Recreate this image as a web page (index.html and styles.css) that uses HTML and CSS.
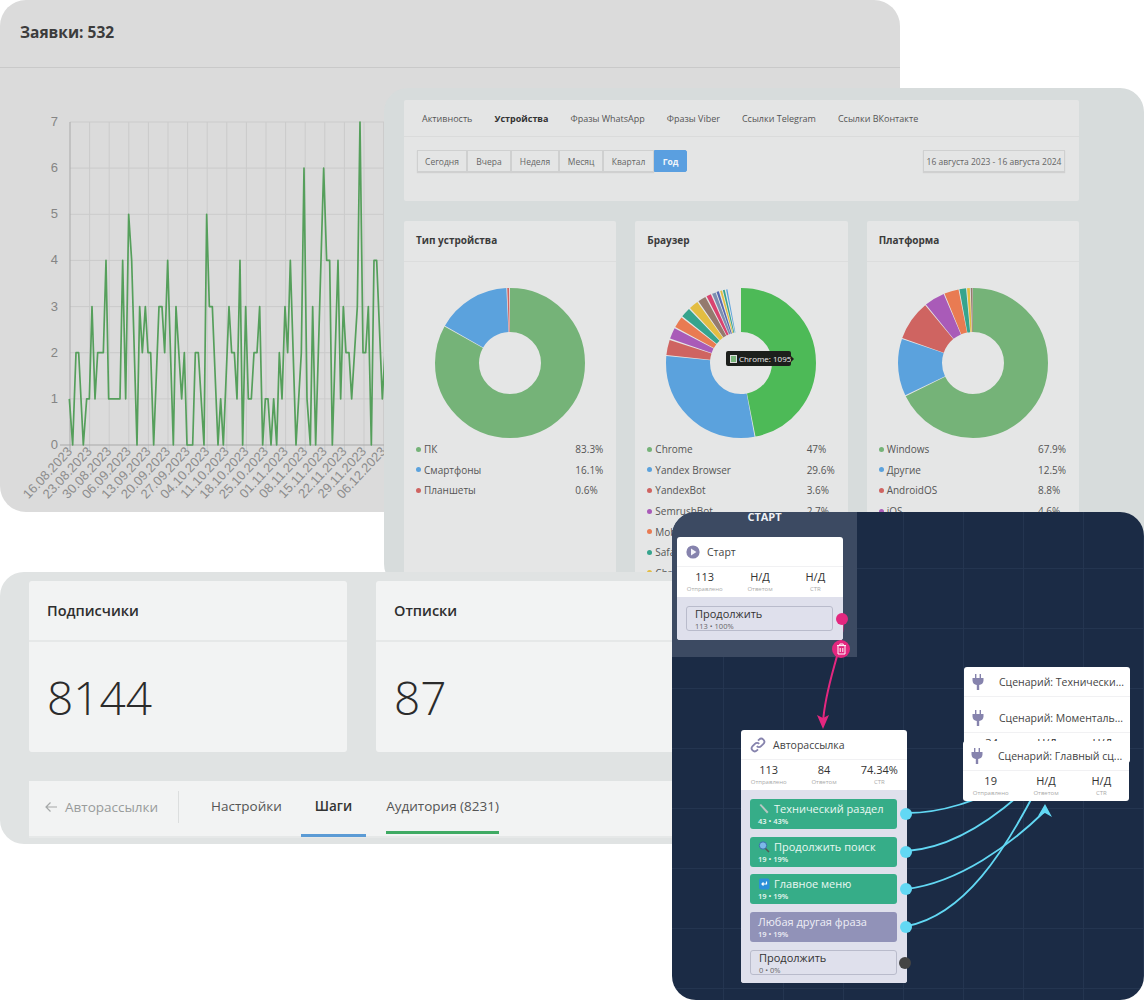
FILE: index.html
```html
<!DOCTYPE html>
<html lang="ru">
<head>
<meta charset="utf-8">
<title>Статистика</title>
<link rel="stylesheet" href="styles.css">
</head>
<body>
<main class="desk">

  <section class="win win-chart">
    <header class="chart-head"><h2>Заявки: 532</h2></header>
    <svg class="chart" width="400" height="444" viewBox="0 68 400 444">
      <path class="grid" d="M70 122H400M70 168.1H400M70 214.3H400M70 260.4H400M70 306.6H400M70 352.7H400M70 398.9H400M89.6 122V450M109.2 122V450M128.8 122V450M148.4 122V450M168 122V450M187.6 122V450M207.2 122V450M226.8 122V450M246.4 122V450M266 122V450M285.6 122V450M305.2 122V450M324.8 122V450M344.4 122V450M364 122V450M383.6 122V450"/>
      <path class="axis" d="M70 122V450M60 445H400"/>
      <g class="y-labels">
        <text x="58" y="126">7</text><text x="58" y="172">6</text><text x="58" y="218">5</text><text x="58" y="264">4</text><text x="58" y="311">3</text><text x="58" y="357">2</text><text x="58" y="403">1</text><text x="58" y="449">0</text>
      </g>
      <g class="x-labels">
        <text transform="translate(73 452) rotate(-47)">16.08.2023</text>
        <text transform="translate(92.6 452) rotate(-47)">23.08.2023</text>
        <text transform="translate(112.2 452) rotate(-47)">30.08.2023</text>
        <text transform="translate(131.8 452) rotate(-47)">06.09.2023</text>
        <text transform="translate(151.4 452) rotate(-47)">13.09.2023</text>
        <text transform="translate(171 452) rotate(-47)">20.09.2023</text>
        <text transform="translate(190.6 452) rotate(-47)">27.09.2023</text>
        <text transform="translate(210.2 452) rotate(-47)">04.10.2023</text>
        <text transform="translate(229.8 452) rotate(-47)">11.10.2023</text>
        <text transform="translate(249.4 452) rotate(-47)">18.10.2023</text>
        <text transform="translate(269 452) rotate(-47)">25.10.2023</text>
        <text transform="translate(288.6 452) rotate(-47)">01.11.2023</text>
        <text transform="translate(308.2 452) rotate(-47)">08.11.2023</text>
        <text transform="translate(327.8 452) rotate(-47)">15.11.2023</text>
        <text transform="translate(347.4 452) rotate(-47)">22.11.2023</text>
        <text transform="translate(367 452) rotate(-47)">29.11.2023</text>
        <text transform="translate(386.6 452) rotate(-47)">06.12.2023</text>
      </g>
      <polyline class="line" transform="translate(0 445) scale(0.33333 -46.14)" points="208,1 218,0 228,2 236,2 250,0 260,1 268,1 276,3 285,1 293,2 310,2 318,4 326,1 360,1 368,4 377,1 386,5 395,4 411,0 419,3 427,2 436,3 444,2 452,2 461,0 477,3 486,3 494,2 503,4 520,0 528,3 545,1 553,2 561,0 578,0 586,2 595,2 612,0 620,5 628,3 637,3 654,0 662,1 670,0 687,3 695,2 703,2 711,1 720,4 728,0 737,3 745,1 754,1 762,2 771,2 779,3 788,0 796,1 804,1 813,0 821,1 830,0 838,2 846,1 855,3 863,2 871,4 888,0 904,2 912,6 921,1 931,0 938,3 947,0 963,4 971,6 980,4 989,4 997,0 1014,4 1022,1 1030,3 1038,2 1047,2 1055,1 1072,3 1080,7 1089,2 1097,2 1105,3 1114,0 1122,4 1130,4 1147,1 1155,2"/>
    </svg>
  </section>

  <section class="win win-devices">
    <div class="dev-panel">
      <nav class="dev-tabs">
        <a>Активность</a><a class="on">Устройства</a><a>Фразы WhatsApp</a><a>Фразы Viber</a><a>Ссылки Telegram</a><a>Ссылки ВКонтакте</a>
      </nav>
      <div class="dev-filters">
        <div class="btn-group">
          <button class="b-1">Сегодня</button><button class="b-2">Вчера</button><button class="b-3">Неделя</button><button class="b-4">Месяц</button><button class="b-5">Квартал</button><button class="b-6 active">Год</button>
        </div>
        <button class="date">16 августа 2023 - 16 августа 2024</button>
      </div>
    </div>

    <div class="dev-cards">
      <article class="dev-card">
        <h3>Тип устройства</h3>
        <div class="donut-wrap">
          <svg class="donut" width="150" height="150" viewBox="0 0 150 150">
            <g transform="rotate(-90 75 75)">
              <circle class="s-green" cx="75" cy="75" r="53" pathLength="100" stroke-dasharray="83.1 100"/>
              <circle class="s-blue" cx="75" cy="75" r="53" pathLength="100" stroke-dasharray="15.9 100" stroke-dashoffset="-83.3"/>
              <circle class="s-red" cx="75" cy="75" r="53" pathLength="100" stroke-dasharray="0.4 100" stroke-dashoffset="-99.4"/>
            </g>
          </svg>
        </div>
        <ul class="legend">
          <li><i class="d-green"></i><span>ПК</span><b>83.3%</b></li>
          <li><i class="d-blue"></i><span>Смартфоны</span><b>16.1%</b></li>
          <li><i class="d-red"></i><span>Планшеты</span><b>0.6%</b></li>
        </ul>
      </article>

      <article class="dev-card">
        <h3>Браузер</h3>
        <div class="donut-wrap">
          <svg class="donut" width="150" height="150" viewBox="0 0 150 150">
            <g transform="rotate(-90 75 75)">
              <circle class="s-chrome" cx="75" cy="75" r="53" pathLength="100" stroke-dasharray="46.9 100"/>
              <circle class="s-blue" cx="75" cy="75" r="53" pathLength="100" stroke-dasharray="29.4 100" stroke-dashoffset="-47.1"/>
              <circle class="s-red" cx="75" cy="75" r="53" pathLength="100" stroke-dasharray="3.3 100" stroke-dashoffset="-76.7"/>
              <circle class="s-purple" cx="75" cy="75" r="53" pathLength="100" stroke-dasharray="2.4 100" stroke-dashoffset="-80.3"/>
              <circle class="s-orange" cx="75" cy="75" r="53" pathLength="100" stroke-dasharray="2.4 100" stroke-dashoffset="-83"/>
              <circle class="s-teal" cx="75" cy="75" r="53" pathLength="100" stroke-dasharray="2.1 100" stroke-dashoffset="-85.7"/>
              <circle class="s-yellow" cx="75" cy="75" r="53" pathLength="100" stroke-dasharray="2 100" stroke-dashoffset="-88.1"/>
              <circle class="s-brown" cx="75" cy="75" r="53" pathLength="100" stroke-dasharray="1.7 100" stroke-dashoffset="-90.4"/>
              <circle class="s-pink" cx="75" cy="75" r="53" pathLength="100" stroke-dasharray="1 100" stroke-dashoffset="-92.4"/>
              <circle class="s-slate" cx="75" cy="75" r="53" pathLength="100" stroke-dasharray="0.8 100" stroke-dashoffset="-93.7"/>
              <circle class="s-indigo" cx="75" cy="75" r="53" pathLength="100" stroke-dasharray="0.5 100" stroke-dashoffset="-94.7"/>
              <circle class="s-yellow" cx="75" cy="75" r="53" pathLength="100" stroke-dasharray="0.4 100" stroke-dashoffset="-95.5"/>
              <circle class="s-teal" cx="75" cy="75" r="53" pathLength="100" stroke-dasharray="0.4 100" stroke-dashoffset="-96.1"/>
              <circle class="s-blue" cx="75" cy="75" r="53" pathLength="100" stroke-dasharray="0.3 100" stroke-dashoffset="-96.8"/>
            </g>
          </svg>
          <div class="tip"><i></i>Chrome: 1095</div>
        </div>
        <ul class="legend">
          <li><i class="d-green"></i><span>Chrome</span><b>47%</b></li>
          <li><i class="d-blue"></i><span>Yandex Browser</span><b>29.6%</b></li>
          <li><i class="d-red"></i><span>YandexBot</span><b>3.6%</b></li>
          <li><i class="d-purple"></i><span>SemrushBot</span><b>2.7%</b></li>
          <li><i class="d-orange"></i><span>Mobile Safari</span><b>2.7%</b></li>
          <li><i class="d-teal"></i><span>Safari</span><b>2.4%</b></li>
          <li><i class="d-yellow"></i><span>Chrome Mobile</span><b>2.3%</b></li>
        </ul>
      </article>

      <article class="dev-card">
        <h3>Платформа</h3>
        <div class="donut-wrap">
          <svg class="donut" width="150" height="150" viewBox="0 0 150 150">
            <g transform="rotate(-90 75 75)">
              <circle class="s-green" cx="75" cy="75" r="53" pathLength="100" stroke-dasharray="67.7 100"/>
              <circle class="s-blue" cx="75" cy="75" r="53" pathLength="100" stroke-dasharray="12.3 100" stroke-dashoffset="-67.9"/>
              <circle class="s-red" cx="75" cy="75" r="53" pathLength="100" stroke-dasharray="8.6 100" stroke-dashoffset="-80.4"/>
              <circle class="s-purple" cx="75" cy="75" r="53" pathLength="100" stroke-dasharray="4.4 100" stroke-dashoffset="-89.2"/>
              <circle class="s-orange" cx="75" cy="75" r="53" pathLength="100" stroke-dasharray="3.1 100" stroke-dashoffset="-93.8"/>
              <circle class="s-teal" cx="75" cy="75" r="53" pathLength="100" stroke-dasharray="1.4 100" stroke-dashoffset="-97.1"/>
              <circle class="s-yellow" cx="75" cy="75" r="53" pathLength="100" stroke-dasharray="0.6 100" stroke-dashoffset="-98.7"/>
              <circle class="s-brown" cx="75" cy="75" r="53" pathLength="100" stroke-dasharray="0.4 100" stroke-dashoffset="-99.5"/>
            </g>
          </svg>
        </div>
        <ul class="legend">
          <li><i class="d-green"></i><span>Windows</span><b>67.9%</b></li>
          <li><i class="d-blue"></i><span>Другие</span><b>12.5%</b></li>
          <li><i class="d-red"></i><span>AndroidOS</span><b>8.8%</b></li>
          <li><i class="d-purple"></i><span>iOS</span><b>4.6%</b></li>
        </ul>
      </article>
    </div>
  </section>

  <section class="win win-subs">
    <div class="sub-cards">
      <article class="sub-card"><h3>Подписчики</h3><div class="sub-num">8144</div></article>
      <article class="sub-card"><h3>Отписки</h3><div class="sub-num">87</div></article>
    </div>
    <nav class="sub-tabs">
      <a class="back">
        <svg width="14" height="12" viewBox="0 0 14 12"><path d="M13 6H2M6.5 1.5 2 6l4.5 4.5"/></svg>
        Авторассылки
      </a>
      <a class="tab">Настройки</a>
      <a class="tab tab-on">Шаги</a>
      <a class="tab tab-aud">Аудитория (8231)</a>
    </nav>
  </section>

  <section class="win win-flow">
    <div class="frame"><span>СТАРТ</span></div>

    <svg class="wires" width="472" height="488" viewBox="672 512 472 488">
      <path class="wire-pink" d="M843 620C843 650 826 680 823 722"/>
      <path class="head-pink" d="M823 729 817 715 823 718 829 715Z"/>
      <path class="wire-cyan" d="M907 813C945 813 975 800 1010 785"/>
      <path class="wire-cyan" d="M907 851C950 848 990 822 1025 790"/>
      <path class="wire-cyan" d="M907 889C960 882 1010 845 1044 812"/>
      <path class="wire-cyan" d="M907 926C965 915 1005 850 1036 790"/>
      <path class="head-cyan" d="M1045 804 1052 817 1045 813 1038 816Z"/>
    </svg>

    <article class="node n-start">
      <header class="node-head">
        <svg class="ic" width="14" height="14" viewBox="0 0 14 14"><circle class="ic-fill" cx="7" cy="7" r="6.6"/><path class="ic-white" d="M5 3.6 10.4 7 5 10.4Z"/></svg>
        <span class="node-title">Старт</span>
      </header>
      <div class="stats">
        <div><strong>113</strong><small>Отправлено</small></div>
        <div><strong>Н/Д</strong><small>Ответом</small></div>
        <div><strong>Н/Д</strong><small>CTR</small></div>
      </div>
      <div class="node-body pad-start">
        <div class="act plain"><strong>Продолжить</strong><small>113 • 100%</small><i class="pin pink"></i></div>
      </div>
      <div class="trash">
        <svg width="11" height="12" viewBox="0 0 11 12"><path d="M1 2.6H10M3.8 2.4V1H7.2V2.4M2 2.6V11H9V2.6M4.2 5V9M6.8 5V9"/></svg>
      </div>
    </article>

    <article class="node n-auto">
      <header class="node-head">
        <svg class="ic ic-link" width="16" height="16" viewBox="0 0 16 16"><path d="M6.8 9.2a3 3 0 0 0 4.3 0l2.3-2.3a3 3 0 0 0-4.3-4.3L8 3.7"/><path d="M9.2 6.8a3 3 0 0 0-4.3 0L2.6 9.1a3 3 0 0 0 4.3 4.3L8 12.3"/></svg>
        <span class="node-title">Авторассылка</span>
      </header>
      <div class="stats">
        <div><strong>113</strong><small>Отправлено</small></div>
        <div><strong>84</strong><small>Ответом</small></div>
        <div><strong>74.34%</strong><small>CTR</small></div>
      </div>
      <div class="node-body">
        <div class="act green"><strong><svg class="emo" width="13" height="12" viewBox="0 0 13 12"><path class="emo-wrench" d="M1.5 2 3 1l7.500 8-1.500 1.500Z"/></svg>Технический раздел</strong><small>43 • 43%</small><i class="pin cyan"></i></div>
        <div class="act green"><strong><svg class="emo" width="13" height="12" viewBox="0 0 13 12"><circle class="emo-glass" cx="5" cy="4.500" r="3.700"/><path class="emo-handle" d="M7.500 7.500 11 11"/></svg>Продолжить поиск</strong><small>19 • 19%</small><i class="pin cyan"></i></div>
        <div class="act green"><strong><svg class="emo" width="13" height="12" viewBox="0 0 13 12"><rect class="emo-box" x="1" y="0.500" width="10.500" height="11" rx="2"/><path class="emo-ret" d="M8.500 3.500v2.500H4M5.500 4.500 4 6l1.500 1.500"/></svg>Главное меню</strong><small>19 • 19%</small><i class="pin cyan"></i></div>
        <div class="act grey"><strong>Любая другая фраза</strong><small>19 • 19%</small><i class="pin cyan"></i></div>
        <div class="act plain short"><strong>Продолжить</strong><small>0 • 0%</small><i class="pin dark"></i></div>
      </div>
    </article>

    <article class="node n-s1">
      <header class="node-head wide">
        <svg class="ic" width="12" height="16" viewBox="0 0 12 16"><path class="ic-fill" d="M3 0h1.400v4H7.600V0H9v4h2.500v2.500c0 2.600-2 4.300-4.300 4.500V16H4.800V11C2.500 10.800.5 9.100.5 6.500V4H3Z"/></svg>
        <span class="node-title">Сценарий: Технически...</span>
      </header>
      <div class="stats">
        <div><strong>43</strong><small>Отправлено</small></div>
        <div><strong>Н/Д</strong><small>Ответом</small></div>
        <div><strong>Н/Д</strong><small>CTR</small></div>
      </div>
    </article>

    <article class="node n-s2">
      <header class="node-head wide">
        <svg class="ic" width="12" height="16" viewBox="0 0 12 16"><path class="ic-fill" d="M3 0h1.400v4H7.600V0H9v4h2.500v2.500c0 2.600-2 4.300-4.300 4.500V16H4.800V11C2.500 10.800.5 9.100.5 6.500V4H3Z"/></svg>
        <span class="node-title">Сценарий: Моменталь...</span>
      </header>
      <div class="stats">
        <div><strong>34</strong><small>Отправлено</small></div>
        <div><strong>Н/Д</strong><small>Ответом</small></div>
        <div><strong>Н/Д</strong><small>CTR</small></div>
      </div>
    </article>

    <article class="node n-s3">
      <header class="node-head wide">
        <svg class="ic" width="12" height="16" viewBox="0 0 12 16"><path class="ic-fill" d="M3 0h1.400v4H7.600V0H9v4h2.500v2.500c0 2.600-2 4.300-4.300 4.500V16H4.800V11C2.500 10.800.5 9.100.5 6.500V4H3Z"/></svg>
        <span class="node-title">Сценарий: Главный сц...</span>
      </header>
      <div class="stats">
        <div><strong>19</strong><small>Отправлено</small></div>
        <div><strong>Н/Д</strong><small>Ответом</small></div>
        <div><strong>Н/Д</strong><small>CTR</small></div>
      </div>
    </article>
  </section>
</main>
</body>
</html>
```
FILE: styles.css
```css
* { box-sizing: border-box; }
html, body { margin: 0; background: #fff; }
body { font-family: "Open Sans", "Liberation Sans", sans-serif; color: #333; }
h2, h3, ul { margin: 0; padding: 0; }
ul { list-style: none; }

.desk { position: relative; width: 1144px; height: 1000px; overflow: hidden; }
.win { position: absolute; overflow: hidden; }

/* chart window */
.win-chart { left: 0; top: 0; width: 900px; height: 512px; background: #dbdbdb; border-radius: 26px; }
.chart-head { height: 68px; padding: 22px 20px 0; border-bottom: 1px solid #c9c9c9; }
.chart-head h2 { font-size: 15.500px; line-height: 20px; font-weight: 700; color: #3c3c3c; }
.chart { display: block; }
.grid { stroke: #cbcbcb; stroke-width: 1; fill: none; }
.axis { stroke: #a9a9a9; stroke-width: 1; fill: none; }
.y-labels text { font: 13px "Liberation Sans", sans-serif; fill: #858585; text-anchor: end; }
.x-labels text { font: 13px "Liberation Sans", sans-serif; fill: #8d8d8d; text-anchor: end; }
.line { fill: none; stroke: #559f5b; stroke-width: 1.700; vector-effect: non-scaling-stroke; stroke-linejoin: round; }

/* devices window */
.win-devices { left: 384px; top: 88px; width: 760px; height: 500px; background: #d7dcdc; border-radius: 24px; padding: 12px 65px 0 20px; }
.dev-panel { height: 101px; background: #e4e5e5; border-radius: 2px; }
.dev-tabs { display: flex; height: 37px; align-items: center; padding-left: 18px; gap: 22px; border-bottom: 1px solid #dadbdb; font-size: 9px; color: #555; }
.dev-tabs .on { font-weight: 700; color: #333; }
.dev-filters { display: flex; justify-content: space-between; align-items: flex-start; padding: 13px 14px 0 13px; }
.btn-group { display: flex; }
.btn-group button, .date { height: 22px; padding: 0; font: 8.500px "Open Sans", sans-serif; color: #666; background: #e4e5e5; border: 1px solid #cfd0d0; box-shadow: 0 1px 1px #d0d0d0; }
.b-1 { width: 50px; } .b-2 { width: 44px; } .b-3 { width: 48px; } .b-4 { width: 44px; } .b-5 { width: 51px; }
.b-6 { width: 33px; }
.btn-group .active { background: #5a9fe0; border-color: #5a9fe0; color: #f2f6fb; font-weight: 700; border-radius: 0 2px 2px 0; box-shadow: none; }
.date { width: 142px; }
.dev-cards { display: flex; gap: 19px; margin-top: 20px; }
.dev-card { flex: 1 1 0; height: 380px; background: #e5e6e6; border-radius: 2px; }
.dev-card h3 { height: 41px; padding: 12px 12px 0; font-size: 10px; line-height: 14px; font-weight: 700; color: #3b3b3b; border-bottom: 1px solid #dcdddd; }
.donut-wrap { position: relative; display: flex; justify-content: center; padding-top: 26px; height: 177px; }
.donut circle { fill: none; stroke-width: 44; }
.s-green { stroke: #75b378; } .s-blue { stroke: #5ba2dd; } .s-red { stroke: #cf6461; }
.s-chrome { stroke: #4dba57; } .s-purple { stroke: #a95bb8; } .s-orange { stroke: #e97b52; }
.s-teal { stroke: #36a48d; } .s-yellow { stroke: #e3bd42; } .s-brown { stroke: #947a6e; }
.s-pink { stroke: #d9436f; } .s-slate { stroke: #7d8fb0; } .s-indigo { stroke: #5667b0; }
.tip { position: absolute; left: 91px; top: 89px; display: flex; align-items: center; gap: 2px; width: 65px; height: 15px; padding-left: 4px; background: #1c1f1c; border-radius: 2px; color: #eee; font-size: 8px; line-height: 15px; white-space: nowrap; }
.tip i { width: 8px; height: 8px; background: #78b57b; border: 1px solid #ddd; }
.tip::after { content: ""; position: absolute; right: -3px; top: 5px; border-left: 3px solid #1c1f1c; border-top: 3px solid transparent; border-bottom: 3px solid transparent; }
.legend li { display: grid; grid-template-columns: 5px 1fr 41px; column-gap: 3px; align-items: center; height: 20.600px; padding-left: 12px; font-size: 10px; color: #555; }
.legend i { width: 5px; height: 5px; border-radius: 50%; }
.legend b { font-weight: 400; }
.d-green { background: #75b378; } .d-blue { background: #5ba2dd; } .d-red { background: #cf6461; }
.d-purple { background: #a95bb8; } .d-orange { background: #e97b52; } .d-teal { background: #36a48d; } .d-yellow { background: #e3bd42; }

/* subscribers window */
.win-subs { left: 0; top: 572px; width: 700px; height: 272px; background: #e0e3e3; border-radius: 24px; padding: 9px 0 0 29px; }
.sub-cards { display: flex; gap: 29px; }
.sub-card { width: 318px; height: 171px; background: #f2f3f3; border-radius: 3px; }
.sub-card h3 { height: 61px; padding: 20px 18px 0; font-size: 14.500px; line-height: 20px; font-weight: 600; color: #2e2e2e; border-bottom: 2px solid #e6e8e8; }
.sub-num { padding: 25px 18px 0; font-size: 46px; line-height: 60px; font-weight: 300; color: #2b2b2b; }
.sub-tabs { display: flex; height: 57px; margin-top: 29px; padding-left: 15px; background: #f2f3f3; border-bottom: 2px solid #e6e8e8; font-size: 13.500px; color: #555; }
.back { display: flex; align-items: center; gap: 7px; width: 135px; height: 32px; margin-top: 10px; border-right: 1px solid #dcdede; color: #989b9b; }
.back svg { fill: none; stroke: #a5a8a8; stroke-width: 1.200; }
.tab { display: block; padding: 16px 14px 0; height: 55px; margin-left: 18px; color: #555; }
.tab + .tab { margin-left: 5px; }
.tab-on { height: 56px; border-bottom: 3px solid #5b9bd5; font-weight: 600; color: #333; padding-left: 14px; padding-right: 14px; }
.tab-on + .tab { margin-left: 20px; }
.tab-aud { height: 53px; padding-left: 0; padding-right: 0; border-bottom: 3px solid #3faa63; color: #555; }

/* flow window */
.win-flow {
  left: 672px; top: 512px; width: 472px; height: 488px; border-radius: 24px;
  background-color: #1b2b45;
  background-image: linear-gradient(#243550 1px, transparent 1px), linear-gradient(90deg, #243550 1px, transparent 1px);
  background-size: 60px 60px;
  background-position: 51px 56px;
}
.frame { position: absolute; left: 0; top: 0; width: 185px; height: 145px; background: #3c4a62; text-align: center; }
.frame span { display: block; margin-top: -3px; font-size: 11px; line-height: 16px; font-weight: 700; color: #eef0f4; }
.wires { position: absolute; left: 0; top: 0; }
.wire-pink { fill: none; stroke: #e3277f; stroke-width: 2; }
.head-pink { fill: #e3277f; }
.wire-cyan { fill: none; stroke: #62d8f4; stroke-width: 1.800; }
.head-cyan { fill: #62d8f4; }

.node { position: absolute; width: 166px; background: #fff; border-radius: 3px; color: #333; }
.n-start { left: 5px; top: 25px; height: 103px; }
.n-auto { left: 69px; top: 218px; height: 253px; }
.n-s1 { left: 292px; top: 155px; height: 60px; }
.n-s2 { left: 292px; top: 191px; height: 60px; }
.n-s3 { left: 291px; top: 229px; height: 60px; }
.node-head { display: flex; align-items: center; gap: 7px; height: 29px; padding-left: 9px; }
.node-head.wide { gap: 15px; padding-left: 8px; }
.node-title { font-size: 10.500px; line-height: 14px; color: #444; white-space: nowrap; }
.ic-fill { fill: #8683ad; }
.ic-white { fill: #f5f5fa; }
.ic-link { fill: none; stroke: #8683ad; stroke-width: 1.800; }
.stats { display: grid; grid-template-columns: repeat(3, 1fr); height: 31px; padding: 3px 0 0; border-top: 1px solid #f1f1f3; text-align: center; }
.stats strong { display: block; font-size: 11px; line-height: 14px; font-weight: 400; color: #333; }
.stats small { display: block; font-size: 6px; line-height: 10px; color: #aaa; }
.node-body { display: flex; flex-direction: column; gap: 7.500px; height: 193px; padding: 9px 10px 0 9px; background: #dfe0ec; border-radius: 0 0 3px 3px; }
.n-start .node-body { height: 43px; }
.act { position: relative; flex: none; height: 30px; padding: 3px 8px 0; border-radius: 3px; }
.act strong { display: flex; align-items: center; gap: 3px; font-size: 11px; line-height: 14px; font-weight: 400; }
.act small { display: block; font-size: 7.500px; line-height: 10px; font-weight: 600; }
.green { background: #36ad88; color: #e9f7f2; }
.grey { background: #9192b8; color: #eeeef6; }
.plain { height: 25px; padding-top: 0; background: #dfe0ec; border: 1px solid #b9bbcb; color: #333; }
.plain small { color: #666; font-weight: 400; }
.short { margin-top: 1px; }
.pin { position: absolute; right: -15px; top: 50%; width: 12px; height: 12px; margin-top: -6px; border-radius: 50%; }
.pin.cyan { background: #62d8f4; }
.pin.pink { background: #e3277f; right: -16px; }
.pin.dark { background: #444; }
.trash { position: absolute; left: 155px; top: 103px; display: flex; align-items: center; justify-content: center; width: 18px; height: 18px; border-radius: 50%; background: #e3277f; }
.trash svg { fill: none; stroke: #fff; stroke-width: 1; }
.emo-wrench { fill: #b9c7c3; }
.emo-glass { fill: #7cb8e8; stroke: #3a6ea8; stroke-width: 1; }
.emo-handle { stroke: #555; stroke-width: 1.500; fill: none; }
.emo-box { fill: #2b8fd9; }
.emo-ret { fill: none; stroke: #fff; stroke-width: 1.200; }
```
